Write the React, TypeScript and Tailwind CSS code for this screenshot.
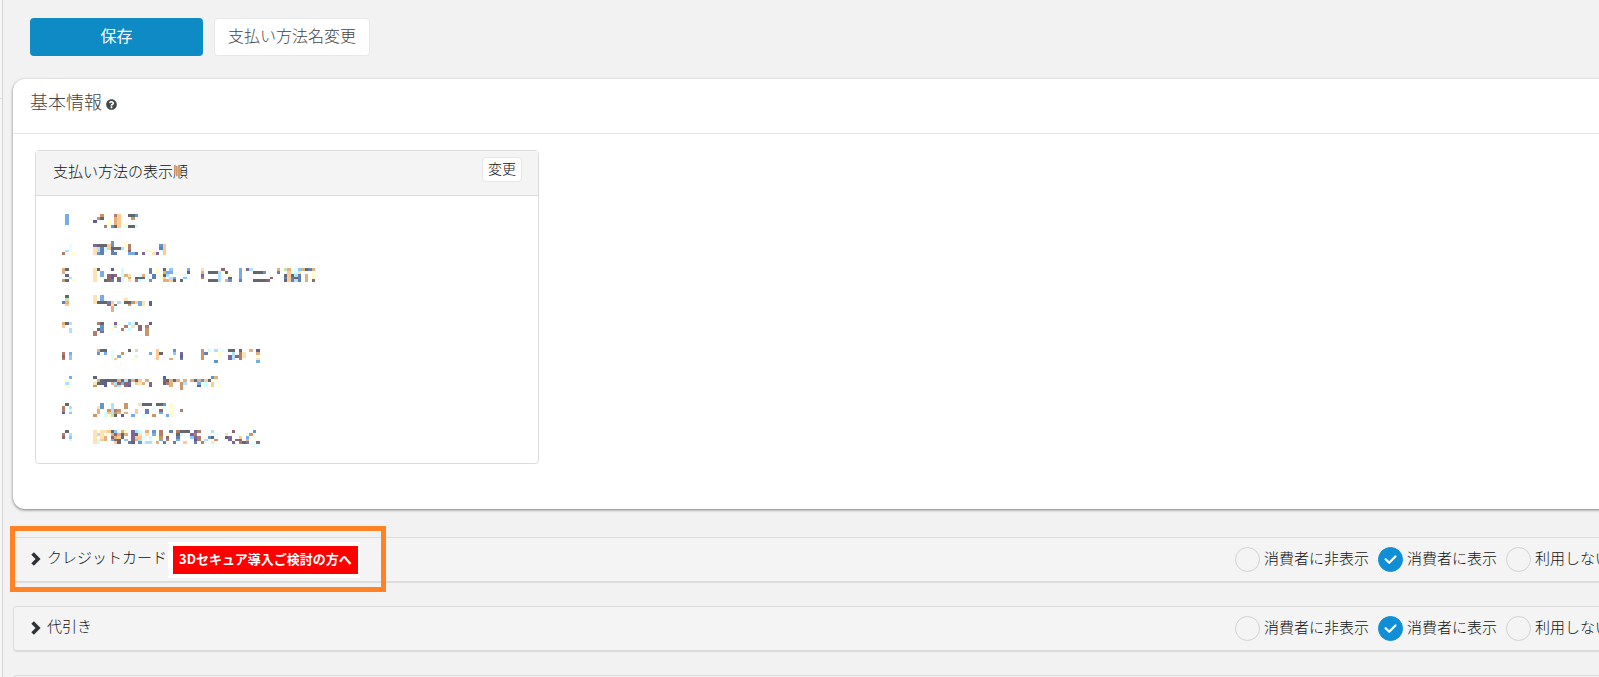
import { FaQuestionCircle } from 'react-icons/fa';

const inks: Record<string, string> = {
  K: '#64676b', b: '#77ade7', B: '#6394cd', n: '#647db4', v: '#5f6092', p: '#7b6799',
  m: '#8f6770', r: '#b27e6b', c: '#c9966b', o: '#e4af7f', O: '#ffca92', y: '#ffe2b3',
  Y: '#ffffce', l: '#afe1ff', s: '#90c5ff', t: '#c9ffff', T: '#e4ffff', g: '#c7e3b2',
};

// One entry per list item: the number takes the first four columns, the name starts at column nine
const methods = [
  [
    '.b.........c...rO..KKB',
    '.b........cK...oO...c',
    '.b.......v...Y.oO',
    '.b...........YToO.Y..T',
    '............r.BKO.TKKt',
  ],
  [
    '..............B...Y',
    '..T......pKKKOB...Yr........BO',
    '..T......ylntOKKKl.r........nO',
    '.l.......ylnt.nT..Ym....YY..TO',
    'r..Y.....yBn..nn...bbp.p..yp.O',
  ],
  [
    'oK.......yK...v..t.......n.Y.K.s....b...y.....m....b.pl.......o.go.TsoKno',
    'o........y.b.....t.......n.Y.obb....v...o.KKKlYK...b...KKKB...n..O.ty...Y',
    '.v.......y.b.mvm.toy..ToT.n.YKl....T....p....l..Y..b............KOKln.o.Y',
    '..l......y...mv.mt.o.KKKT.n.YO.lb..sT...r....l..v..b........m...nOnKn.o.Y',
    'cK.Y.....y..Kmn.pt.y.rtT.B...ooOK.K.......KKKl.oB..n...KKKKm....KOnln.o.m',
  ],
  [
    '.K.......y.b',
    '.g.......y.b......y',
    'no.......yKKKnO.l.KKcOby.v',
    '.O...........mym...c..by.v',
    '..............oT',
    '..............o',
  ],
  [
    'oKl.......rK...p...ltm...v',
    'O..........B...g..r.y.m.r',
    '..l.......KB..Y..r.t..m.c',
    '..l......r.m.k..T.......c',
    '.........r...k...Y......c',
  ],
  [
    '..........oKK.T....K.g.....O....B.......c.t.l.T.KK.K..o.v',
    'r.b.......B.b.T..c.......b.OK...s.p.....cn...Y...l.ry...o',
    'm.s...........T.b....t.....O......v.....c....Y..plmry...Y',
    'r.s...........TO....Y......O...o..n.....c.......pl.r....y',
    '............................................B...........b',
  ],
  [
    '..b......K...................v.............Bo',
    '.Y.......ToKvKKKoKlKoKO.o....pKoKo.o.oKoBOK.Y',
    '.lT......yKKv.olmbmpTOyo.p...Kro..cl...b.t.O',
    '.Y.......c..v..ol.mv.....p.....o..c....v.t.O.Y',
    '..................................c',
  ],
  [
    '.K.........B..l...c...yKKK.KKB.Y',
    'r.l.......yB..l...c.......T..T.Y',
    'r.t.......o..clrc....O..n...m..Y..r',
    'v.s.......o.TOlco.o..O..n...b..Y',
    '.........c..tYgK.v..b..T..c...bY',
  ],
  [
    '.K.......y.yyOKs.oY.plt.o.B.r..n.rKKK.pr...l.....m.....B',
    'r.l......ylyY.omoKo.pKy.y.b.r.Y..Kt..pr.....T..y......c',
    'm.s......y.yo.moOK..pOOT.t.Yc.m..n...spr..BK...Kp..O.b.Y',
    '..t......ytOo.bmK.s.mol..T..b.r..b....vr.l..c...p.mm.o',
    '.........yt....OK..nv.BTll.o.n..n..O..n.r..y.....p.rKn.Tm',
    '.......................................................TT',
  ],
];

const columns = 73;

function MosaicLine({ rows }: { rows: string[] }) {
  return (
    <svg
      viewBox={`0 0 ${columns} 6`}
      preserveAspectRatio="none"
      shapeRendering="crispEdges"
      className="h-[17px] w-[253px]"
      aria-hidden="true"
    >
      {rows.map((row, y) =>
        row.split('').map((ink, x) =>
          inks[ink] ? <rect key={`${x}-${y}`} x={x} y={y} width="1" height="1" fill={inks[ink]} /> : null
        )
      )}
    </svg>
  );
}

const visibility = ['消費者に非表示', '消費者に表示', '利用しない'];

function VisibilityOptions({ name }: { name: string }) {
  return (
    <div className="flex shrink-0 items-center gap-[9px]">
      {visibility.map((text, index) => (
        <label key={text} className="flex items-center gap-1 whitespace-nowrap">
          <span className="grid size-[25px] place-items-center">
            <input
              type="radio"
              name={name}
              defaultChecked={index === 1}
              className="peer col-start-1 row-start-1 size-[25px] appearance-none rounded-full border border-[#d3d2cd] bg-[#f4f4f4] checked:border-[#118fd6] checked:bg-[#118fd6]"
            />
            <svg
              viewBox="0 0 25 25"
              className="pointer-events-none invisible col-start-1 row-start-1 size-[25px] peer-checked:visible"
              fill="none"
              stroke="#fff"
              strokeWidth="2.2"
              strokeLinecap="round"
              strokeLinejoin="round"
            >
              <path d="M7.6 12.2l3.6 3.6 6.2-6.4" />
            </svg>
          </span>
          <span className="pb-1">{text}</span>
        </label>
      ))}
    </div>
  );
}

function PaymentRow({ title, name, promo }: { title?: string; name?: string; promo?: string }) {
  return (
    <section className="relative flex h-[46px] items-center justify-between rounded border border-b-2 border-[#dcdcdc] bg-[#f4f4f4] pr-[15px] pl-4 text-[15px] leading-5">
      {title && (
        <div className="flex items-center">
          <button type="button" className="flex items-center gap-[5px] pb-[6px]">
            <svg viewBox="0 0 12 14" className="mt-1 h-[14px] w-3" fill="none" stroke="#2f3237" strokeWidth="3.6">
              <path d="M2.6 1.6L8 7l-5.4 5.4" />
            </svg>
            {title}
          </button>
          {promo && (
            <a href="#secure" className="ml-px bg-white py-1 pr-[2px] pl-[5px]">
              <span className="block bg-[#fe0000] px-[6px] pt-[3px] pb-[5px] text-[13px] font-bold text-white">
                {promo}
              </span>
            </a>
          )}
        </div>
      )}
      {name && <VisibilityOptions name={name} />}
      {promo && (
        <div className="pointer-events-none absolute -top-3 -left-1 h-[66px] w-[376px] border-5 border-[#ff8227]" />
      )}
    </section>
  );
}

export default function App() {
  return (
    <div className="flex h-screen overflow-hidden bg-[#f2f2f2] font-['Noto_Sans_CJK_JP',sans-serif] font-light text-[#111]">
      <aside className="w-[3px] shrink-0 border-r border-[#d6d6d6] bg-[#f7f7f7]">
        <div className="h-[99px] border-b border-[#ddd]" />
      </aside>
      <main className="-mr-[27px] min-w-0 flex-1 pl-[10px]">
        <div className="flex gap-[11px] pt-[18px] pl-[17px]">
          <button
            type="button"
            className="h-[38px] w-[173px] rounded bg-[#0e8ac5] pb-1 text-base font-normal text-white"
          >
            保存
          </button>
          <button
            type="button"
            className="h-[38px] rounded border border-[#e6e8ea] bg-white px-[13px] pb-1 text-base text-[#444]"
          >
            支払い方法名変更
          </button>
        </div>

        <section className="mt-[23px] h-[430px] rounded-xl bg-white shadow-[0_1px_3px_rgba(0,0,0,0.5)]">
          <div className="flex h-[55px] items-center gap-1 border-b border-[#e6e6e6] pb-[10px] pl-[17px]">
            <h2 className="text-lg leading-6 text-[#444]">基本情報</h2>
            <FaQuestionCircle className="mt-[6px] size-[11px] text-[#44474c]" />
          </div>
          <div className="mt-4 ml-[22px] w-[504px] rounded border border-[#dcdcdc]">
            <div className="flex h-[45px] items-start justify-between border-b border-[#dcdcdc] bg-[#f4f4f4] pr-4 pl-[17px]">
              <h3 className="mt-[10px] text-[15px] leading-5">支払い方法の表示順</h3>
              <button
                type="button"
                className="mt-[6px] h-[25px] rounded border border-[#e6e6e6] bg-white px-[5px] pb-[6px] text-sm leading-5"
              >
                変更
              </button>
            </div>
            <ol className="pt-[18px] pb-[6px] pl-[26px]">
              {methods.map((rows, index) => (
                <li key={index} className="h-[27px]">
                  <MosaicLine rows={rows} />
                </li>
              ))}
            </ol>
          </div>
        </section>

        <div className="mt-7 flex flex-col gap-[23px]">
          <PaymentRow title="クレジットカード" name="credit" promo="3Dセキュア導入ご検討の方へ" />
          <PaymentRow title="代引き" name="cod" />
          <PaymentRow />
        </div>
      </main>
    </div>
  );
}
